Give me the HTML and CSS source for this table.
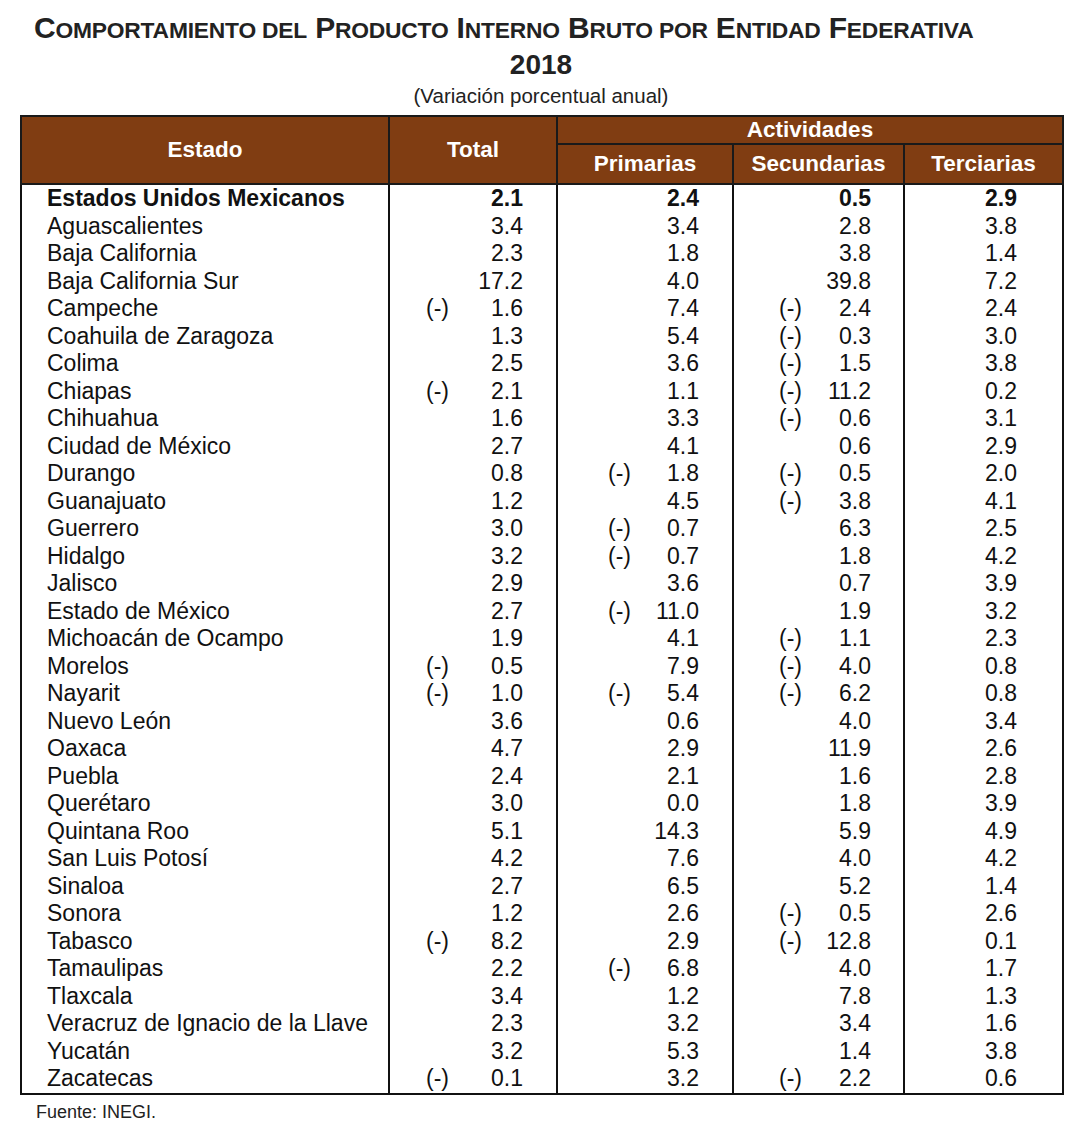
FILE: index.html
```html
<!DOCTYPE html>
<html lang="es">
<head>
<meta charset="utf-8">
<title>Comportamiento del PIB por Entidad Federativa 2018</title>
<link rel="stylesheet" href="styles.css">
</head>
<body>
<div class="page">
  <h1 class="title">C<span class="sc">omportamiento del</span> P<span class="sc">roducto</span> I<span class="sc">nterno</span> B<span class="sc">ruto por</span> E<span class="sc">ntidad</span> F<span class="sc">ederativa</span></h1>
  <div class="year">2018</div>
  <div class="subtitle">(Variación porcentual anual)</div>
  <table class="pib">
    <colgroup>
      <col class="c-estado"><col class="c-total"><col class="c-prim"><col class="c-sec"><col class="c-ter">
    </colgroup>
    <thead>
      <tr class="h1">
        <th rowspan="2">Estado</th>
        <th rowspan="2">Total</th>
        <th colspan="3" class="act">Actividades</th>
      </tr>
      <tr class="h2">
        <th>Primarias</th>
        <th>Secundarias</th>
        <th>Terciarias</th>
      </tr>
    </thead>
    <tbody>
      <tr class="nat"><td class="name">Estados Unidos Mexicanos</td><td class="n t">2.1</td><td class="n p">2.4</td><td class="n s">0.5</td><td class="n r">2.9</td></tr>
      <tr><td class="name">Aguascalientes</td><td class="n t">3.4</td><td class="n p">3.4</td><td class="n s">2.8</td><td class="n r">3.8</td></tr>
      <tr><td class="name">Baja California</td><td class="n t">2.3</td><td class="n p">1.8</td><td class="n s">3.8</td><td class="n r">1.4</td></tr>
      <tr><td class="name">Baja California Sur</td><td class="n t">17.2</td><td class="n p">4.0</td><td class="n s">39.8</td><td class="n r">7.2</td></tr>
      <tr><td class="name">Campeche</td><td class="n t"><span class="neg">(-)</span>1.6</td><td class="n p">7.4</td><td class="n s"><span class="neg">(-)</span>2.4</td><td class="n r">2.4</td></tr>
      <tr><td class="name">Coahuila de Zaragoza</td><td class="n t">1.3</td><td class="n p">5.4</td><td class="n s"><span class="neg">(-)</span>0.3</td><td class="n r">3.0</td></tr>
      <tr><td class="name">Colima</td><td class="n t">2.5</td><td class="n p">3.6</td><td class="n s"><span class="neg">(-)</span>1.5</td><td class="n r">3.8</td></tr>
      <tr><td class="name">Chiapas</td><td class="n t"><span class="neg">(-)</span>2.1</td><td class="n p">1.1</td><td class="n s"><span class="neg">(-)</span>11.2</td><td class="n r">0.2</td></tr>
      <tr><td class="name">Chihuahua</td><td class="n t">1.6</td><td class="n p">3.3</td><td class="n s"><span class="neg">(-)</span>0.6</td><td class="n r">3.1</td></tr>
      <tr><td class="name">Ciudad de México</td><td class="n t">2.7</td><td class="n p">4.1</td><td class="n s">0.6</td><td class="n r">2.9</td></tr>
      <tr><td class="name">Durango</td><td class="n t">0.8</td><td class="n p"><span class="neg">(-)</span>1.8</td><td class="n s"><span class="neg">(-)</span>0.5</td><td class="n r">2.0</td></tr>
      <tr><td class="name">Guanajuato</td><td class="n t">1.2</td><td class="n p">4.5</td><td class="n s"><span class="neg">(-)</span>3.8</td><td class="n r">4.1</td></tr>
      <tr><td class="name">Guerrero</td><td class="n t">3.0</td><td class="n p"><span class="neg">(-)</span>0.7</td><td class="n s">6.3</td><td class="n r">2.5</td></tr>
      <tr><td class="name">Hidalgo</td><td class="n t">3.2</td><td class="n p"><span class="neg">(-)</span>0.7</td><td class="n s">1.8</td><td class="n r">4.2</td></tr>
      <tr><td class="name">Jalisco</td><td class="n t">2.9</td><td class="n p">3.6</td><td class="n s">0.7</td><td class="n r">3.9</td></tr>
      <tr><td class="name">Estado de México</td><td class="n t">2.7</td><td class="n p"><span class="neg">(-)</span>11.0</td><td class="n s">1.9</td><td class="n r">3.2</td></tr>
      <tr><td class="name">Michoacán de Ocampo</td><td class="n t">1.9</td><td class="n p">4.1</td><td class="n s"><span class="neg">(-)</span>1.1</td><td class="n r">2.3</td></tr>
      <tr><td class="name">Morelos</td><td class="n t"><span class="neg">(-)</span>0.5</td><td class="n p">7.9</td><td class="n s"><span class="neg">(-)</span>4.0</td><td class="n r">0.8</td></tr>
      <tr><td class="name">Nayarit</td><td class="n t"><span class="neg">(-)</span>1.0</td><td class="n p"><span class="neg">(-)</span>5.4</td><td class="n s"><span class="neg">(-)</span>6.2</td><td class="n r">0.8</td></tr>
      <tr><td class="name">Nuevo León</td><td class="n t">3.6</td><td class="n p">0.6</td><td class="n s">4.0</td><td class="n r">3.4</td></tr>
      <tr><td class="name">Oaxaca</td><td class="n t">4.7</td><td class="n p">2.9</td><td class="n s">11.9</td><td class="n r">2.6</td></tr>
      <tr><td class="name">Puebla</td><td class="n t">2.4</td><td class="n p">2.1</td><td class="n s">1.6</td><td class="n r">2.8</td></tr>
      <tr><td class="name">Querétaro</td><td class="n t">3.0</td><td class="n p">0.0</td><td class="n s">1.8</td><td class="n r">3.9</td></tr>
      <tr><td class="name">Quintana Roo</td><td class="n t">5.1</td><td class="n p">14.3</td><td class="n s">5.9</td><td class="n r">4.9</td></tr>
      <tr><td class="name">San Luis Potosí</td><td class="n t">4.2</td><td class="n p">7.6</td><td class="n s">4.0</td><td class="n r">4.2</td></tr>
      <tr><td class="name">Sinaloa</td><td class="n t">2.7</td><td class="n p">6.5</td><td class="n s">5.2</td><td class="n r">1.4</td></tr>
      <tr><td class="name">Sonora</td><td class="n t">1.2</td><td class="n p">2.6</td><td class="n s"><span class="neg">(-)</span>0.5</td><td class="n r">2.6</td></tr>
      <tr><td class="name">Tabasco</td><td class="n t"><span class="neg">(-)</span>8.2</td><td class="n p">2.9</td><td class="n s"><span class="neg">(-)</span>12.8</td><td class="n r">0.1</td></tr>
      <tr><td class="name">Tamaulipas</td><td class="n t">2.2</td><td class="n p"><span class="neg">(-)</span>6.8</td><td class="n s">4.0</td><td class="n r">1.7</td></tr>
      <tr><td class="name">Tlaxcala</td><td class="n t">3.4</td><td class="n p">1.2</td><td class="n s">7.8</td><td class="n r">1.3</td></tr>
      <tr><td class="name">Veracruz de Ignacio de la Llave</td><td class="n t">2.3</td><td class="n p">3.2</td><td class="n s">3.4</td><td class="n r">1.6</td></tr>
      <tr><td class="name">Yucatán</td><td class="n t">3.2</td><td class="n p">5.3</td><td class="n s">1.4</td><td class="n r">3.8</td></tr>
      <tr><td class="name">Zacatecas</td><td class="n t"><span class="neg">(-)</span>0.1</td><td class="n p">3.2</td><td class="n s"><span class="neg">(-)</span>2.2</td><td class="n r">0.6</td></tr>
    </tbody>
  </table>
  <div class="source">Fuente: INEGI.</div>
</div>
</body>
</html>
```

FILE: styles.css
```css
html, body {
  margin: 0;
  padding: 0;
  background: #ffffff;
}

body {
  font-family: "Liberation Sans", Arial, sans-serif;
  color: #111111;
}

.page {
  width: 1082px;
  padding-top: 11px;
}

.title {
  margin: 0;
  padding-left: 34px;
  font-size: 30px;
  line-height: 34px;
  font-weight: bold;
  color: #222222;
  white-space: nowrap;
  letter-spacing: -0.2px;
}

.title .sc {
  text-transform: uppercase;
  font-size: 0.76em;
}

.year {
  text-align: center;
  font-size: 28px;
  line-height: 36px;
  font-weight: bold;
  color: #222222;
}

.subtitle {
  text-align: center;
  font-size: 20.5px;
  line-height: 26px;
  color: #222222;
}

.pib {
  margin: 6px 0 0 20px;
  width: 1042px;
  table-layout: fixed;
  border-collapse: collapse;
  border: 2px solid #111111;
  font-size: 23px;
}

.c-estado { width: 368px; }
.c-total { width: 168px; }
.c-prim { width: 176px; }
.c-sec { width: 171px; }
.c-ter { width: 159px; }

.pib th {
  background: #803d12;
  color: #ffffff;
  font-weight: bold;
  font-size: 22.5px;
  border: 2px solid #1a1a1a;
  padding: 0;
  text-align: center;
}

.pib .h1 th.act {
  height: 26px;
  line-height: 26px;
}

.pib .h2 th {
  height: 38px;
  line-height: 38px;
}

.pib td {
  padding: 0;
  height: 27.5px;
  line-height: 27.5px;
  border-left: 2px solid #111111;
  border-right: 2px solid #111111;
  white-space: nowrap;
}

.pib td.name {
  padding-left: 25px;
  text-align: left;
}

.pib td.n {
  text-align: right;
}

.pib td.t { padding-right: 33px; }
.pib td.p { padding-right: 33px; }
.pib td.s { padding-right: 32px; }
.pib td.r { padding-right: 45px; }

.neg {
  float: left;
}

.pib td.t .neg { margin-left: 36px; }
.pib td.p .neg { margin-left: 50px; }
.pib td.s .neg { margin-left: 45px; }

.pib tr.nat td {
  font-weight: bold;
}

.source {
  margin: 7px 0 0 36px;
  font-size: 18px;
  line-height: 20px;
  color: #222222;
}
```
